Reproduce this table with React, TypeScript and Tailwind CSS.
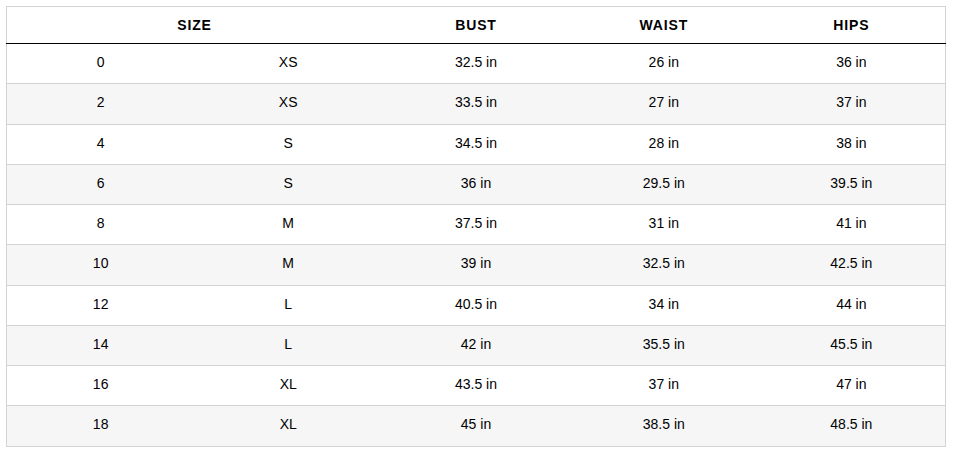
const rows = [
  { n: "0", s: "XS", bust: "32.5 in", waist: "26 in", hips: "36 in" },
  { n: "2", s: "XS", bust: "33.5 in", waist: "27 in", hips: "37 in" },
  { n: "4", s: "S", bust: "34.5 in", waist: "28 in", hips: "38 in" },
  { n: "6", s: "S", bust: "36 in", waist: "29.5 in", hips: "39.5 in" },
  { n: "8", s: "M", bust: "37.5 in", waist: "31 in", hips: "41 in" },
  { n: "10", s: "M", bust: "39 in", waist: "32.5 in", hips: "42.5 in" },
  { n: "12", s: "L", bust: "40.5 in", waist: "34 in", hips: "44 in" },
  { n: "14", s: "L", bust: "42 in", waist: "35.5 in", hips: "45.5 in" },
  { n: "16", s: "XL", bust: "43.5 in", waist: "37 in", hips: "47 in" },
  { n: "18", s: "XL", bust: "45 in", waist: "38.5 in", hips: "48.5 in" },
];

export default function App() {
  return (
    <div className="bg-white px-[6px] pt-[6px] font-['Liberation_Sans',Arial,sans-serif] text-[14px] text-black">
      <table className="w-[940px] table-fixed border-collapse border border-[#d3d3d3]">
        <thead>
          <tr className="h-[37px] border-b border-b-black">
            <th colSpan={2} className="text-center text-[14px] font-bold tracking-[0.06em]">
              SIZE
            </th>
            <th className="text-center text-[14px] font-bold tracking-[0.06em]">BUST</th>
            <th className="text-center text-[14px] font-bold tracking-[0.06em]">WAIST</th>
            <th className="text-center text-[14px] font-bold tracking-[0.06em]">HIPS</th>
          </tr>
        </thead>
        <tbody>
          {rows.map((r, i) => (
            <tr
              key={r.n}
              className={`h-[40.25px] border-t border-[#d3d3d3] ${i % 2 === 1 ? "bg-[#f6f6f6]" : "bg-white"}`}
            >
              <td className="pb-[2px] text-center">{r.n}</td>
              <td className="pb-[2px] text-center">{r.s}</td>
              <td className="pb-[2px] text-center">{r.bust}</td>
              <td className="pb-[2px] text-center">{r.waist}</td>
              <td className="pb-[2px] text-center">{r.hips}</td>
            </tr>
          ))}
        </tbody>
      </table>
    </div>
  );
}
